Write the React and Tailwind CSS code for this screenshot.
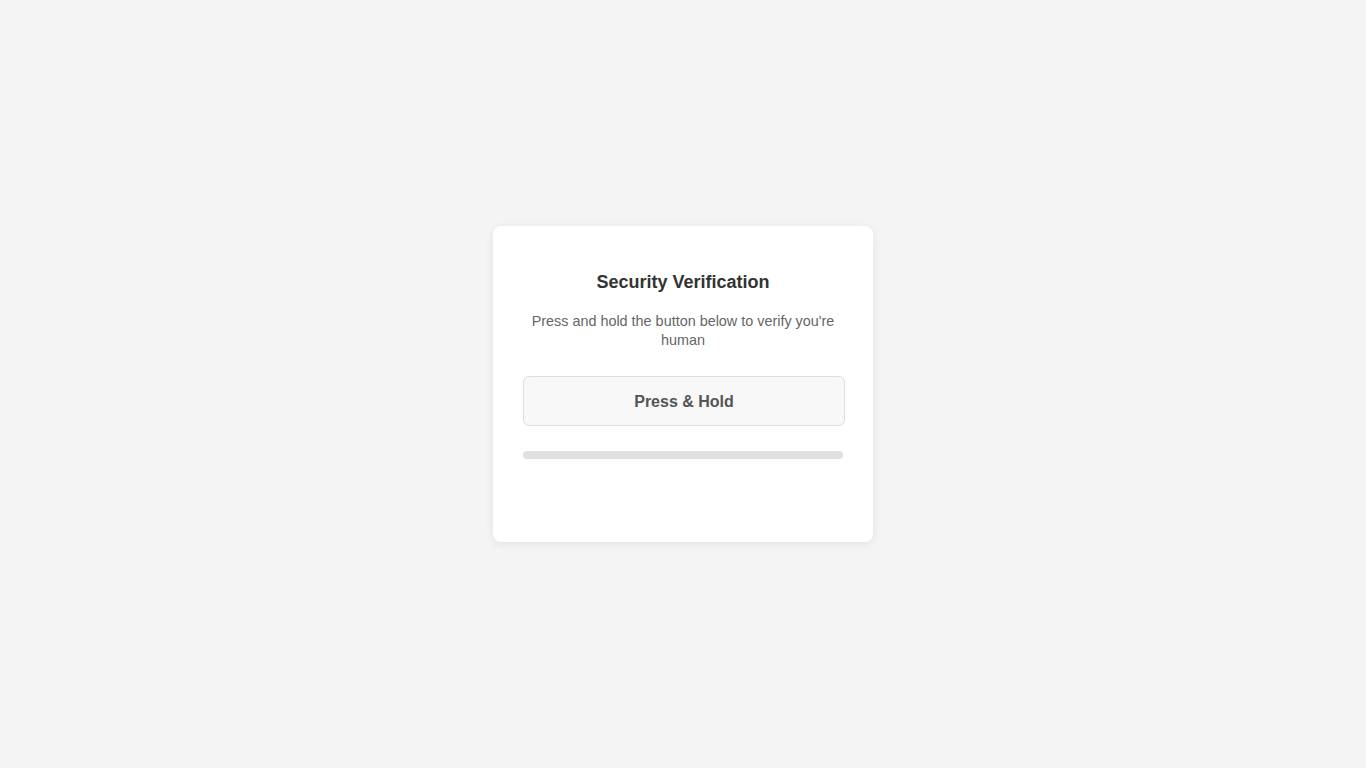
export default function App() {
  return (
    <div
      className="min-h-screen w-full bg-[#f4f4f4] flex items-center justify-center"
      style={{ fontFamily: '"Liberation Sans", Arial, sans-serif' }}
    >
      <div className="w-[380px] h-[316px] bg-white rounded-[8px] shadow-[0_2px_8px_rgba(0,0,0,0.08)] px-[30px] pt-[45px] flex flex-col items-center">
        <h2 className="text-[18px] leading-[22px] font-bold text-[#333] text-center">
          Security Verification
        </h2>
        <p className="mt-[19px] text-[14.4px] leading-[19px] text-[#666] text-center">
          Press and hold the button below to verify you're human
        </p>
        <button
          type="button"
          className="mt-[26px] w-[322px] h-[50px] pt-[2px] shrink-0 self-start bg-[#f8f8f8] border border-[#ddd] rounded-[6px] text-[16px] font-bold text-[#555] select-none"
        >
          Press &amp; Hold
        </button>
        <div className="mt-[25px] w-[320px] h-[8px] rounded-full bg-[#e0e0e0] self-start overflow-hidden">
          <div className="h-full bg-[#4caf50]" style={{ width: "0%" }} />
        </div>
      </div>
    </div>
  );
}
